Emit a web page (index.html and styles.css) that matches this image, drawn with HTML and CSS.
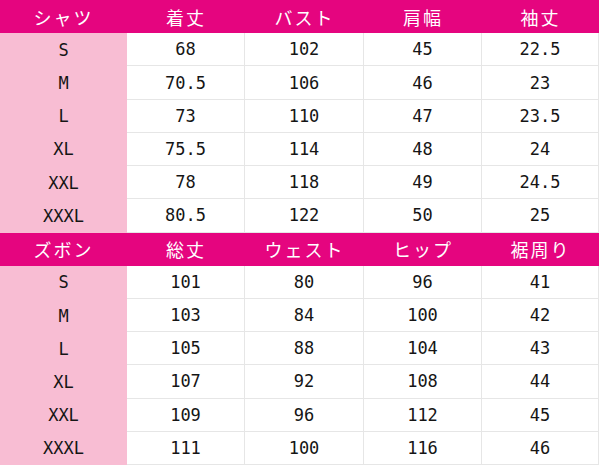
FILE: index.html
```html
<!DOCTYPE html>
<html lang="ja">
<head>
<meta charset="utf-8">
<title>サイズ表</title>
<link rel="stylesheet" href="styles.css">
</head>
<body>
<div class="chart">
  <div class="cell head">シャツ</div>
  <div class="cell head">着丈</div>
  <div class="cell head">バスト</div>
  <div class="cell head">肩幅</div>
  <div class="cell head">袖丈</div>

  <div class="cell size">S</div><div class="cell">68</div><div class="cell">102</div><div class="cell">45</div><div class="cell">22.5</div>
  <div class="cell size">M</div><div class="cell">70.5</div><div class="cell">106</div><div class="cell">46</div><div class="cell">23</div>
  <div class="cell size">L</div><div class="cell">73</div><div class="cell">110</div><div class="cell">47</div><div class="cell">23.5</div>
  <div class="cell size">XL</div><div class="cell">75.5</div><div class="cell">114</div><div class="cell">48</div><div class="cell">24</div>
  <div class="cell size">XXL</div><div class="cell">78</div><div class="cell">118</div><div class="cell">49</div><div class="cell">24.5</div>
  <div class="cell size">XXXL</div><div class="cell">80.5</div><div class="cell">122</div><div class="cell">50</div><div class="cell">25</div>

  <div class="cell head">ズボン</div>
  <div class="cell head">総丈</div>
  <div class="cell head">ウェスト</div>
  <div class="cell head">ヒップ</div>
  <div class="cell head">裾周り</div>

  <div class="cell size">S</div><div class="cell">101</div><div class="cell">80</div><div class="cell">96</div><div class="cell">41</div>
  <div class="cell size">M</div><div class="cell">103</div><div class="cell">84</div><div class="cell">100</div><div class="cell">42</div>
  <div class="cell size">L</div><div class="cell">105</div><div class="cell">88</div><div class="cell">104</div><div class="cell">43</div>
  <div class="cell size">XL</div><div class="cell">107</div><div class="cell">92</div><div class="cell">108</div><div class="cell">44</div>
  <div class="cell size">XXL</div><div class="cell">109</div><div class="cell">96</div><div class="cell">112</div><div class="cell">45</div>
  <div class="cell size last">XXXL</div><div class="cell">111</div><div class="cell">100</div><div class="cell">116</div><div class="cell">46</div>
</div>
</body>
</html>
```
FILE: styles.css
```css
html, body {
  margin: 0;
  padding: 0;
  background: #ffffff;
}

.chart {
  display: grid;
  grid-template-columns: 127px 118px 119px 118px 117px;
  grid-template-rows: repeat(14, 1fr);
  width: 599px;
  height: 465px;
  font-family: "DejaVu Sans Mono", "Liberation Mono", monospace;
}

.cell {
  box-sizing: border-box;
  display: flex;
  align-items: center;
  justify-content: center;
  font-size: 17px;
  color: #151515;
  border-right: 1px solid #e6e6e6;
  border-bottom: 1px solid #e6e6e6;
}

.head {
  background: #e5057f;
  color: #ffffff;
  font-family: "Noto Sans CJK JP", "Liberation Sans", sans-serif;
  font-size: 18px;
  letter-spacing: 2px;
  border: none;
}

.size {
  background: #f8bdd3;
  border: none;
}

.last {
  border-bottom: 2px solid #5b8ee0;
  margin-bottom: -2px;
}
```
